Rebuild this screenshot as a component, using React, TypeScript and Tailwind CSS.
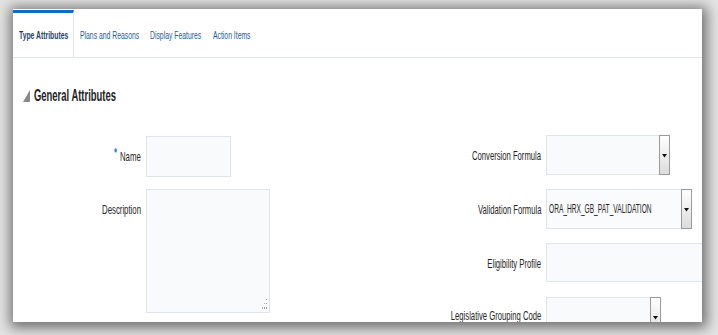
import React from "react";

function Arrow() {
  return (
    <svg width="5" height="5" viewBox="0 0 5 5">
      <polygon points="0,1 5,1 2.5,4.5" fill="#111" />
    </svg>
  );
}

function DropBtn() {
  return (
    <div className="w-[11px] -my-px -mr-px border border-[#9a9a9a] bg-linear-to-b from-white to-[#dcdcdc] flex items-center justify-center shrink-0">
      <Arrow />
    </div>
  );
}

function Label({ children, up }: { children: React.ReactNode; up?: boolean }) {
  return (
    <div className={up ? "h-[40px] flex items-center justify-end pb-[4px]" : "h-[40px] flex items-center justify-end"}>
      <span className="inline-block whitespace-nowrap origin-right scale-x-[0.59] text-[13px] leading-[15px] text-[#252525]">
        {children}
      </span>
    </div>
  );
}

export default function App() {
  return (
    <div className="w-[718px] h-[335px] overflow-hidden bg-[#e4e4e4] pt-[9px] pl-[13px] font-['Liberation_Sans',Arial,sans-serif]">
      <div className="w-[689px] h-[313px] bg-white overflow-hidden shadow-[1px_2px_12px_4px_rgba(0,0,0,0.5)]">
        {/* Tabs */}
        <div className="flex h-[49px] border-b border-[#e1e6ee]">
          <div className="w-[61px] mt-px border-t-[3px] border-t-[#0b6dc7] border-r border-r-[#e1e6ee] pl-[6px] flex items-center">
            <span className="inline-block whitespace-nowrap origin-left scale-x-[0.62] text-[11px] font-bold text-[#1d3e6c]">
              Type Attributes
            </span>
          </div>
          <div className="w-[70px] pt-[4px] pl-[6px] flex items-center">
            <span className="inline-block whitespace-nowrap origin-left scale-x-[0.62] text-[11px] text-[#1a5d9e]">
              Plans and Reasons
            </span>
          </div>
          <div className="w-[63px] pt-[4px] pl-[6px] flex items-center">
            <span className="inline-block whitespace-nowrap origin-left scale-x-[0.62] text-[11px] text-[#1a5d9e]">
              Display Features
            </span>
          </div>
          <div className="w-[60px] pt-[4px] pl-[6px] flex items-center">
            <span className="inline-block whitespace-nowrap origin-left scale-x-[0.62] text-[11px] text-[#1a5d9e]">
              Action Items
            </span>
          </div>
        </div>

        {/* Heading */}
        <div className="flex items-center h-[20px] mt-[28px] pl-[10px] gap-[4px]">
          <svg width="7" height="12" viewBox="0 0 7 12">
            <polygon points="7,0 7,12 0,12" fill="#8a8a8a" />
          </svg>
          <span className="inline-block whitespace-nowrap origin-left scale-x-[0.555] text-[17px] font-bold text-[#222]">
            General Attributes
          </span>
        </div>

        {/* Form */}
        <div className="flex mt-[29px]">
          {/* Left column */}
          <div className="w-[300px] shrink-0 pt-px grid grid-cols-[128px_auto] gap-x-[5px] gap-y-[12px] content-start">
            <div className="h-[41px] flex items-center justify-end">
              <span className="inline-block whitespace-nowrap origin-right scale-x-[0.6] text-[13px] text-[#252525]">
                <span className="relative -top-[4px] mr-[5px] font-bold text-[#2a72c6]">*</span>
                Name
              </span>
            </div>
            <div className="w-[85px] h-[41px] border border-[#dfe4ea] bg-[#f8fafc]" />

            <div className="h-[41px] flex items-center justify-end">
              <span className="inline-block whitespace-nowrap origin-right scale-x-[0.6] text-[13px] text-[#252525]">
                Description
              </span>
            </div>
            <div className="w-[124px] h-[124px] border border-[#dfe4ea] bg-[#f8fafc] flex items-end justify-end pr-[2px] pb-[2px]">
              <svg width="5" height="11" viewBox="0 0 5 11">
                <rect x="4" y="0" width="1" height="1" fill="#9a9a9a" />
                <rect x="4" y="4" width="1" height="1" fill="#9a9a9a" />
                <rect x="2" y="4" width="1" height="1" fill="#b0b0b0" />
                <rect x="4" y="8" width="1" height="2" fill="#9a9a9a" />
                <rect x="2" y="8" width="1" height="2" fill="#9a9a9a" />
                <rect x="0" y="8" width="1" height="2" fill="#b0b0b0" />
              </svg>
            </div>
          </div>

          {/* Right column */}
          <div className="shrink-0 grid grid-cols-[228px_auto] gap-x-[5px] gap-y-[14px] content-start">
            <Label>Conversion Formula</Label>
            <div className="w-[124px] h-[40px] flex border border-[#dfe4ea] bg-[#f8fafc]">
              <div className="flex-1" />
              <DropBtn />
            </div>

            <Label>Validation Formula</Label>
            <div className="w-[146px] h-[40px] flex border border-[#dfe4ea] bg-[#fafbfc]">
              <div className="flex-1 min-w-0 overflow-hidden flex items-center pl-[2px]">
                <span className="inline-block whitespace-nowrap origin-left scale-x-[0.55] text-[12px] text-[#252525]">
                  ORA_HRX_GB_PAT_VALIDATION
                </span>
              </div>
              <DropBtn />
            </div>

            <Label>Eligibility Profile</Label>
            <div className="w-[170px] h-[39px] border border-[#dfe4ea] bg-[#f8fafc]" />

            <Label up>Legislative Grouping Code</Label>
            <div className="w-[115px] h-[40px] flex border border-[#dfe4ea] bg-[#f8fafc]">
              <div className="flex-1" />
              <DropBtn />
            </div>
          </div>
        </div>
      </div>
    </div>
  );
}
